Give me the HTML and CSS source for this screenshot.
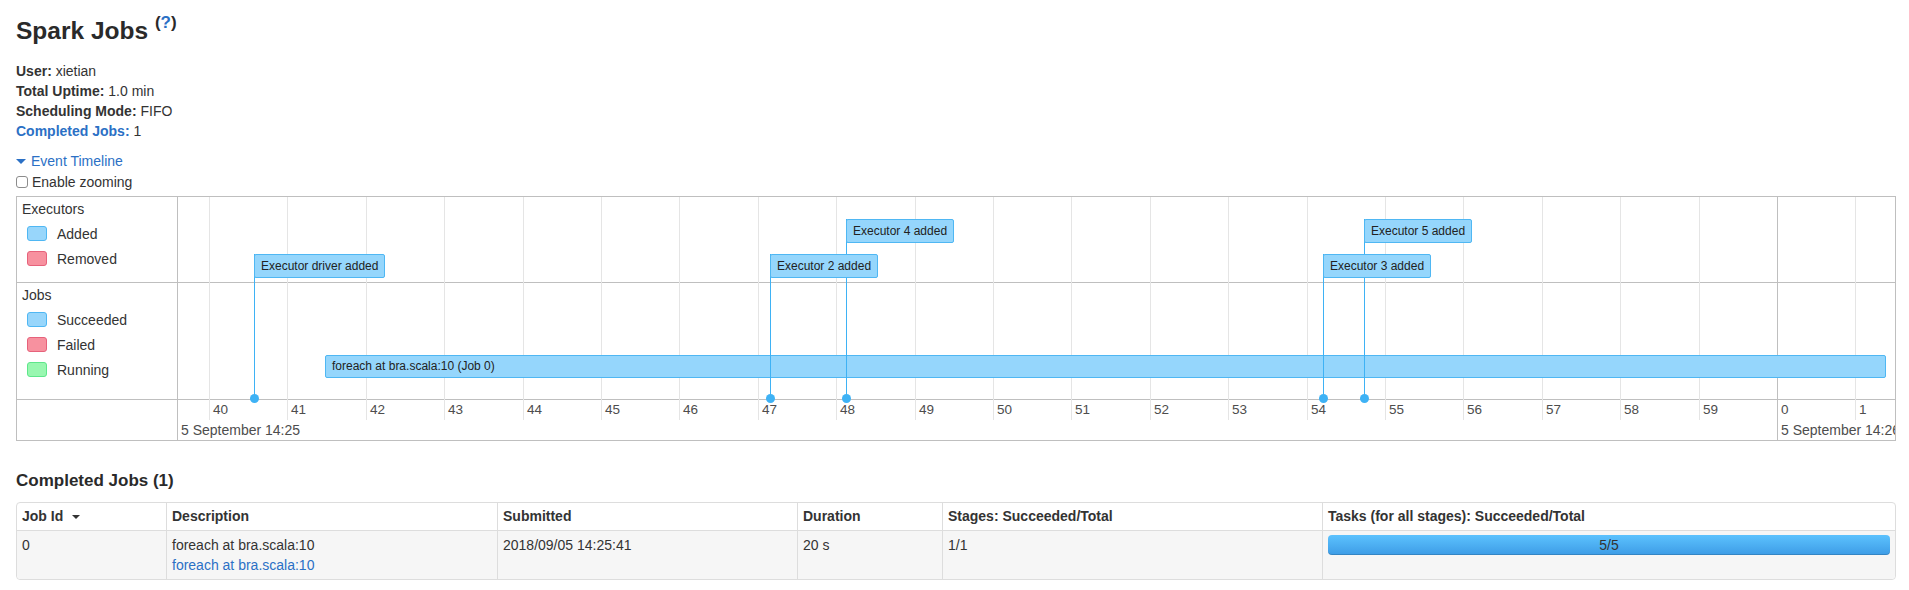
FILE: index.html
```html
<!DOCTYPE html>
<html>
<head>
<meta charset="utf-8">
<title>Spark Jobs</title>
<link rel="stylesheet" href="styles.css">
</head>
<body>
<div class="page">
  <h3 class="title">Spark Jobs <sup class="help">(<a href="#">?</a>)</sup></h3>
  <ul class="summary">
    <li><strong>User:</strong> xietian</li>
    <li><strong>Total Uptime:</strong> 1.0 min</li>
    <li><strong>Scheduling Mode:</strong> FIFO</li>
    <li><a href="#"><strong>Completed Jobs:</strong></a> 1</li>
  </ul>
  <div class="timeline-toggle"><span class="arrow"></span><a href="#">Event Timeline</a></div>
  <label class="zoom-opt"><span class="checkbox"></span>Enable zooming</label>

  <div class="timeline">
    <div class="tl-cell tl-label lbl-exec">
      <div class="tl-heading">Executors</div>
      <div class="legend"><span class="swatch blue"></span>Added</div>
      <div class="legend"><span class="swatch red"></span>Removed</div>
    </div>
    <div class="tl-cell tl-label lbl-jobs">
      <div class="tl-heading">Jobs</div>
      <div class="legend"><span class="swatch blue"></span>Succeeded</div>
      <div class="legend"><span class="swatch red"></span>Failed</div>
      <div class="legend"><span class="swatch green"></span>Running</div>
    </div>
    <div class="tl-cell lbl-axis"></div>
    <div class="tl-cell band-exec"></div>
    <div class="tl-cell band-jobs"></div>
    <div class="tl-cell band-axis"></div>

    <div class="tl-canvas">
      <div class="tick major" style="left:-1px"><span class="major-label">5 September 14:25</span></div>
      <div class="tick" style="left:31px"><span class="tick-label">40</span></div>
      <div class="tick" style="left:109px"><span class="tick-label">41</span></div>
      <div class="tick" style="left:188px"><span class="tick-label">42</span></div>
      <div class="tick" style="left:266px"><span class="tick-label">43</span></div>
      <div class="tick" style="left:345px"><span class="tick-label">44</span></div>
      <div class="tick" style="left:423px"><span class="tick-label">45</span></div>
      <div class="tick" style="left:501px"><span class="tick-label">46</span></div>
      <div class="tick" style="left:580px"><span class="tick-label">47</span></div>
      <div class="tick" style="left:658px"><span class="tick-label">48</span></div>
      <div class="tick" style="left:737px"><span class="tick-label">49</span></div>
      <div class="tick" style="left:815px"><span class="tick-label">50</span></div>
      <div class="tick" style="left:893px"><span class="tick-label">51</span></div>
      <div class="tick" style="left:972px"><span class="tick-label">52</span></div>
      <div class="tick" style="left:1050px"><span class="tick-label">53</span></div>
      <div class="tick" style="left:1129px"><span class="tick-label">54</span></div>
      <div class="tick" style="left:1207px"><span class="tick-label">55</span></div>
      <div class="tick" style="left:1285px"><span class="tick-label">56</span></div>
      <div class="tick" style="left:1364px"><span class="tick-label">57</span></div>
      <div class="tick" style="left:1442px"><span class="tick-label">58</span></div>
      <div class="tick" style="left:1521px"><span class="tick-label">59</span></div>
      <div class="tick major" style="left:1599px"><span class="tick-label">0</span><span class="major-label">5 September 14:26</span></div>
      <div class="tick" style="left:1677px"><span class="tick-label">1</span></div>

      <div class="job" style="left:147px;top:158px;width:1561px">foreach at bra.scala:10 (Job 0)</div>

      <div class="evt" style="left:76px;top:57px"><div class="evt-box">Executor driver added</div></div>
      <div class="evt" style="left:592px;top:57px"><div class="evt-box">Executor 2 added</div></div>
      <div class="evt" style="left:668px;top:22px"><div class="evt-box">Executor 4 added</div></div>
      <div class="evt" style="left:1145px;top:57px"><div class="evt-box">Executor 3 added</div></div>
      <div class="evt" style="left:1186px;top:22px"><div class="evt-box">Executor 5 added</div></div>
    </div>
  </div>

  <h4 class="section-title">Completed Jobs (1)</h4>
  <table class="jobs">
    <thead>
      <tr>
        <th class="c-id">Job Id <span class="sort"></span></th>
        <th class="c-desc">Description</th>
        <th class="c-sub">Submitted</th>
        <th class="c-dur">Duration</th>
        <th class="c-stg">Stages: Succeeded/Total</th>
        <th class="c-tasks">Tasks (for all stages): Succeeded/Total</th>
      </tr>
    </thead>
    <tbody>
      <tr>
        <td>0</td>
        <td><div>foreach at bra.scala:10</div><a href="#">foreach at bra.scala:10</a></td>
        <td>2018/09/05 14:25:41</td>
        <td>20 s</td>
        <td>1/1</td>
        <td><div class="progress">5/5</div></td>
      </tr>
    </tbody>
  </table>
</div>
</body>
</html>
```
FILE: styles.css
```css
* { box-sizing: border-box; }
html, body { margin: 0; background: #fff; }
body {
  font-family: "Liberation Sans", Arial, sans-serif;
  font-size: 14px;
  line-height: 20px;
  color: #333;
}
a { color: #2b70c5; text-decoration: none; }

.page { padding: 11px 13px 0 16px; }

.title {
  margin: 0 0 10px;
  font-size: 24.5px;
  line-height: 40px;
  font-weight: bold;
  color: #2a2a2a;
}
.help {
  font-size: 17px;
  line-height: 17px;
  vertical-align: 11px;
  font-weight: bold;
}

.summary { list-style: none; margin: 0 0 10px; padding: 0; }
.summary strong { font-weight: bold; }

.timeline-toggle { display: flex; align-items: center; height: 20px; }
.arrow {
  width: 0; height: 0;
  border-left: 5px solid transparent;
  border-right: 5px solid transparent;
  border-top: 5px solid #2b70c5;
  margin-right: 5px;
}
.zoom-opt { display: flex; align-items: center; height: 20px; margin: 1px 0 4px; }
.checkbox {
  width: 12px; height: 12px;
  border: 1px solid #8c8c8c;
  border-radius: 3px;
  background: #fff;
  margin-right: 4px;
}

/* timeline */
.timeline {
  display: grid;
  grid-template-columns: 160px 1fr;
  grid-template-rows: 85px 116px 40px;
  gap: 1px;
  background: #bfbfbf;
  border: 1px solid #bfbfbf;
}
.tl-cell { background: #fff; }
.lbl-exec { grid-column: 1; grid-row: 1; }
.lbl-jobs { grid-column: 1; grid-row: 2; }
.lbl-axis { grid-column: 1; grid-row: 3; }
.band-exec { grid-column: 2; grid-row: 1; }
.band-jobs { grid-column: 2; grid-row: 2; }
.band-axis { grid-column: 2; grid-row: 3; }
.tl-label { padding-left: 5px; }
.tl-heading { height: 24px; line-height: 24px; }
.legend { display: flex; align-items: center; height: 25px; padding-left: 5px; }
.swatch {
  width: 20px; height: 15px;
  border: 1px solid;
  border-radius: 3px;
  margin-right: 10px;
}
.swatch.blue { background: #98d6fb; border-color: #4fb7f3; }
.swatch.red { background: #f7919f; border-color: #e6627b; }
.swatch.green { background: #98f7b0; border-color: #5ee68b; }

.tl-canvas {
  grid-column: 2;
  grid-row: 1 / 4;
  position: relative;
  overflow: hidden;
}
.tick {
  position: absolute;
  top: 0;
  width: 1px;
  height: 223px;
  background: #e5e5e5;
}
.tick.major { height: 100%; background: #bfbfbf; }
.tick-label {
  position: absolute;
  left: 4px;
  top: 205px;
  font-size: 13.5px;
  line-height: 16px;
  color: #4d4d4d;
  white-space: nowrap;
}
.major-label {
  position: absolute;
  left: 4px;
  top: 225px;
  font-size: 14px;
  line-height: 16px;
  color: #4d4d4d;
  white-space: nowrap;
}

.job {
  position: absolute;
  z-index: 1;
  height: 23px;
  line-height: 21px;
  padding-left: 6px;
  border: 1px solid #4fb7f3;
  border-radius: 2px;
  background: #95d6fc;
  font-size: 12px;
  color: #222;
  white-space: nowrap;
}
.evt { position: absolute; bottom: 41px; }
.evt::before {
  content: "";
  position: absolute;
  z-index: 2;
  left: 0; top: 0; bottom: 0;
  width: 1px;
  background: #3eb2f5;
}
.evt::after {
  content: "";
  position: absolute;
  z-index: 2;
  left: -4px; bottom: -4px;
  width: 9px; height: 9px;
  border-radius: 50%;
  background: #3eb2f5;
}
.evt-box {
  position: relative;
  z-index: 3;
  height: 24px;
  line-height: 22px;
  padding: 0 6px;
  border: 1px solid #4fb7f3;
  border-radius: 2px;
  background: #95d6fc;
  font-size: 12px;
  color: #222;
  white-space: nowrap;
}

/* completed jobs table */
.section-title {
  margin: 30px 0 11px;
  font-size: 17px;
  line-height: 20px;
  font-weight: bold;
  color: #2a2a2a;
}
.jobs {
  width: 100%;
  table-layout: fixed;
  border-collapse: separate;
  border-spacing: 0;
  border: 1px solid #ddd;
  border-radius: 4px;
}
.jobs th, .jobs td {
  text-align: left;
  vertical-align: top;
  line-height: 20px;
  border-left: 1px solid #ddd;
}
.jobs th { padding: 3px 5px 4px; font-weight: bold; }
.jobs td { padding: 4px 5px; border-top: 1px solid #ddd; background: #f6f6f6; }
.jobs th:first-child, .jobs td:first-child { border-left: 0; }
.jobs td:first-child { border-bottom-left-radius: 4px; }
.jobs td:last-child { border-bottom-right-radius: 4px; }
.c-id { width: 149px; }
.c-desc { width: 331px; }
.c-sub { width: 300px; }
.c-dur { width: 145px; }
.c-stg { width: 380px; }
.sort {
  display: inline-block;
  width: 0; height: 0;
  border-left: 4px solid transparent;
  border-right: 4px solid transparent;
  border-top: 4px solid #333;
  margin-left: 5px;
  vertical-align: middle;
}
.progress {
  height: 20px;
  border-radius: 4px;
  background: linear-gradient(#5cc2fe, #3d9ce6);
  box-shadow: inset 0 -1px 0 rgba(0, 0, 0, 0.15);
  text-align: center;
  font-size: 14px;
  line-height: 20px;
  color: #333;
}
```
